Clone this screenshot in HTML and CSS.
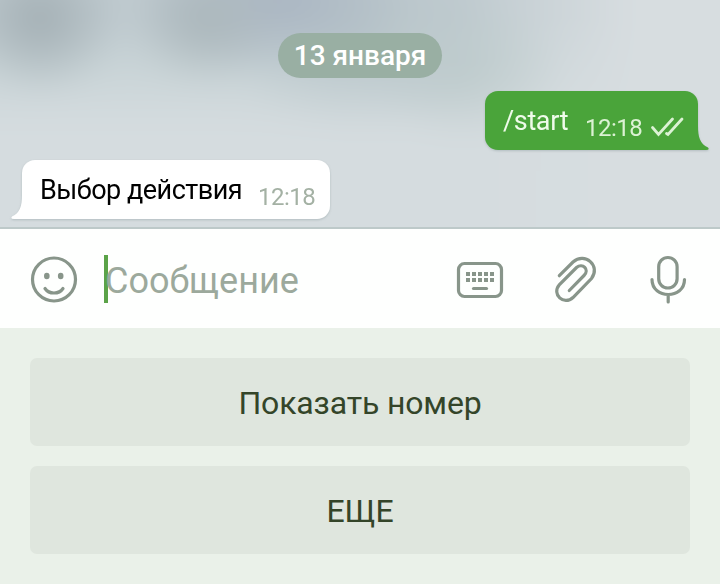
FILE: index.html
```
<!DOCTYPE html>
<html lang="ru">
<head>
<meta charset="utf-8">
<title>Чат</title>
<link rel="stylesheet" href="styles.css">
</head>
<body>
<main class="screen">
  <section class="chat">
    <div class="date">13 января</div>
    <div class="bubble outgoing">
      <span class="text">/start</span>
      <span class="time">12:18</span>
      <svg class="checks" width="36" height="22" viewBox="0 0 36 22"><path d="M3.500 12.500l6 7L23.500 4M17.500 18.500l1.500 1L33 4"/></svg>
      <svg class="tail" width="14" height="24" viewBox="0 0 14 24"><path d="M0 0H2C2 11 4 18 12 21.5Q14 24 10 24H0Z"/></svg>
    </div>
    <div class="bubble incoming">
      <span class="text">Выбор действия</span>
      <span class="time">12:18</span>
      <svg class="tail" width="14" height="24" viewBox="0 0 14 24"><path d="M14 0H12C12 11 10 18 2 21.5Q0 24 4 24H14Z"/></svg>
    </div>
  </section>
  <section class="composer">
    <svg class="icon" width="48" height="50" viewBox="0 0 48 50"><circle cx="24" cy="25.500" r="21.5"/><path d="M15 34.500C19 40.500 29 40.500 33 34.500"/><g class="solid"><ellipse cx="16.8" cy="22" rx="2.8" ry="3.3"/><ellipse cx="30.7" cy="22" rx="2.8" ry="3.3"/></g></svg>
    <div class="field"><i class="caret"></i><span class="placeholder">Сообщение</span></div>
    <svg class="icon" width="48" height="50" viewBox="0 0 48 50"><rect x="2.5" y="9.5" width="43" height="33" rx="6"/><path class="keys" d="M10 20h28M10 26h28"/><path d="M17.5 34.500h13"/></svg>
    <svg class="icon clip" width="48" height="50" viewBox="0 0 48 50"><path d="M7.3 21.7L21 8C33 -2.500 49 12 39.500 24.500L21 43.500C12 52 -1 40.500 7.500 30.500L24.500 13.500C30.500 8.500 38 15.500 32 21.500L17.300 36.500"/></svg>
    <svg class="icon mic" width="48" height="50" viewBox="0 0 48 50"><rect x="14.700" y="3.500" width="18.400" height="30.500" rx="9.200"/><path d="M8 25.500C8 45.500 40.500 45.500 40.500 25.500M24.200 41V48"/></svg>
  </section>
  <section class="keyboard">
    <button class="key">Показать номер</button>
    <button class="key">ЕЩЕ</button>
  </section>
</main>
</body>
</html>
```
FILE: styles.css
```
* { box-sizing: border-box; }
body { margin: 0; font-family: Roboto, "Liberation Sans", sans-serif; }
.screen { width: 720px; height: 584px; display: flex; flex-direction: column; overflow: hidden; }
.chat {
  position: relative;
  isolation: isolate;
  overflow: hidden;
  height: 229px;
  padding: 33px 22px 0;
  display: flex;
  flex-direction: column;
  border-bottom: 2px solid #bdc9c9;
}
.chat::before {
  content: "";
  position: absolute;
  z-index: -1;
  inset: -40px;
  filter: blur(14px);
  background:
    radial-gradient(ellipse 80px 75px at 80px 60px, #a3afb4, transparent),
    radial-gradient(ellipse 75px 65px at 245px 62px, #abb7bb, transparent),
    radial-gradient(ellipse 140px 75px at 320px 40px, #a9b5c2, transparent),
    radial-gradient(ellipse 150px 90px at 400px 80px, #b9c6ca, transparent),
    radial-gradient(ellipse 100px 70px at 505px 110px, #bfcccd, transparent),
    linear-gradient(90deg, transparent 62%, #d7dde0 84%),
    linear-gradient(#bfcacf 20%, #c9d4d7 35%, #d5dcdf 55%, #d5dcdf);
}
.date {
  align-self: center;
  width: 164px;
  height: 45px;
  border-radius: 23px;
  background: #99afa3;
  color: #fff;
  font-size: 28px;
  font-weight: 500;
  line-height: 46px;
  text-align: center;
  white-space: nowrap;
}
.bubble {
  position: relative;
  height: 59px;
  border-radius: 13px;
  display: flex;
  white-space: nowrap;
  filter: drop-shadow(0 1px 1px #9ba8ab99);
}
.text { width: 66px; font-size: 27px; letter-spacing: -0.35px; line-height: 61px; }
.time { width: 57px; font-size: 24px; letter-spacing: -0.5px; line-height: 75px; }
.outgoing {
  align-self: flex-end;
  width: 213px;
  margin-top: 13px;
  padding-left: 18px;
  background: #4aa43a;
  color: #effbea;
  border-bottom-right-radius: 0;
}
.outgoing .time { margin-left: 16px; color: #dcf2d4; }
.checks { margin: 24px 0 0 7px; fill: none; stroke: #dcf2d4; stroke-width: 2.8; stroke-linecap: round; }
.incoming {
  width: 308px;
  margin-top: 10px;
  padding-left: 18px;
  background: #fff;
  color: #000;
  border-bottom-left-radius: 0;
}
.incoming .text { width: 202px; letter-spacing: -0.5px; }
.incoming .time { margin-left: 16px; color: #a4b1a4; }
.tail { position: absolute; bottom: 0; }
.outgoing .tail { right: -12px; fill: #4aa43a; }
.incoming .tail { left: -12px; fill: #fff; }
.composer {
  height: 99px;
  padding: 0 28px 0 30px;
  background: #fefffe;
  display: flex;
  align-items: center;
}
.icon { flex: none; fill: none; stroke: #88958a; stroke-width: 3.2; stroke-linecap: round; }
.solid { fill: #88958a; stroke: none; }
.keys { stroke-width: 4; stroke-dasharray: 4 2; stroke-linecap: butt; }
.clip { margin-left: 48px; }
.mic { margin-left: 44px; }
.field { flex: 1; display: flex; align-items: center; margin-left: 26px; padding-top: 1px; }
.caret { width: 4px; height: 48px; background: #5ba348; }
.placeholder { margin-left: -3px; padding-top: 4px; font-size: 36px; line-height: 48px; color: #9ca99c; }
.keyboard { flex: 1; padding: 30px; background: #eaf1e9; display: flex; flex-direction: column; gap: 20px; }
.key {
  flex: none;
  height: 88px;
  border: 0;
  border-radius: 7px;
  padding: 3px 0 0;
  background: #dfe6de;
  color: #344529;
  font: 32px/85px Roboto, "Liberation Sans", sans-serif;
  letter-spacing: -0.15px;
}
```
